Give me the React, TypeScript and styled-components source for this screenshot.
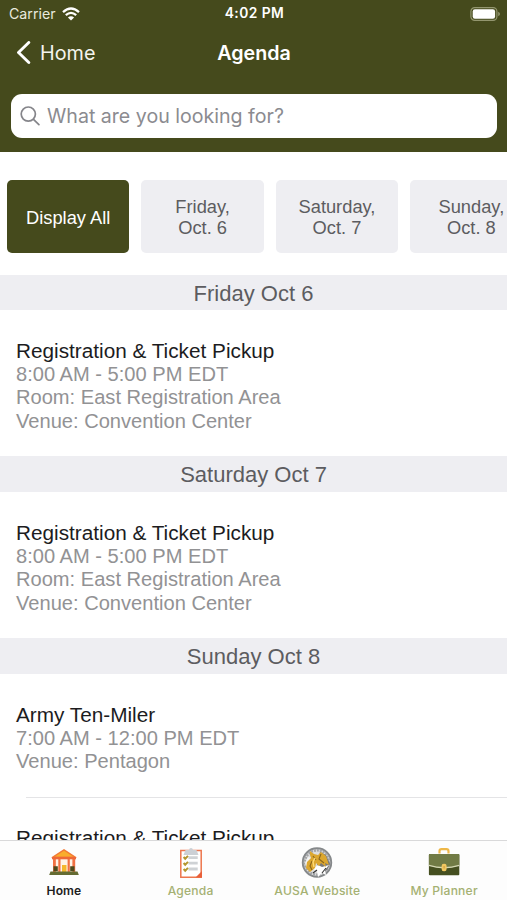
import React from "react";
import styled, { createGlobalStyle } from "styled-components";

const OLIVE = "#454a1c";

const GlobalStyle = createGlobalStyle`
  * { box-sizing: border-box; }
  body { margin: 0; background: #fff; }
  h1, h2, h3, p { margin: 0; font-weight: 400; }
  button { border: 0; padding: 0; background: none; font: inherit; color: inherit; }
`;

const Screen = styled.div`
  width: 507px;
  height: 900px;
  overflow: hidden;
  display: flex;
  flex-direction: column;
  background: #fff;
  font-family: "Liberation Sans", Arial, sans-serif;
`;

const Header = styled.header`
  flex: none;
  height: 152px;
  background: ${OLIVE};
  color: #fff;
  font-family: Inter, sans-serif;
`;

const StatusBar = styled.div`
  height: 27px;
  padding: 0 7px 0 9px;
  display: grid;
  grid-template-columns: 1fr auto 1fr;
  align-items: center;
  line-height: 27px;
`;

const Carrier = styled.div`
  display: flex;
  align-items: center;
  gap: 6px;
  font-size: 14.2px;
  color: #e9eadf;
`;

const Clock = styled.div`
  font-weight: 600;
  font-size: 13.8px;
  letter-spacing: 0.45px;
`;

const Battery = styled.svg`
  justify-self: end;
`;

const NavBar = styled.nav`
  height: 51px;
  padding: 0 16px;
  display: grid;
  grid-template-columns: 1fr auto 1fr;
  align-items: center;
`;

const BackButton = styled.button`
  display: flex;
  align-items: center;
  gap: 9px;
  font-size: 19.8px;
  color: #f4f4ee;
`;

const Title = styled.h1`
  font-size: 19.7px;
  font-weight: 600;
  padding-left: 1px;
`;

const SearchField = styled.label`
  margin: 16px 10px 0 11px;
  height: 43.5px;
  padding-left: 9px;
  display: flex;
  align-items: center;
  gap: 7px;
  border-radius: 11px;
  background: #fff;
  color: #8b8b90;
`;

const SearchInput = styled.input`
  flex: 1;
  border: 0;
  outline: 0;
  padding: 0;
  background: none;
  font: 19.6px Inter, sans-serif;
  &::placeholder { color: #8b8b90; opacity: 1; }
`;

const DayFilter = styled.div`
  flex: none;
  display: flex;
  gap: 12px;
  padding: 28px 0 0 7px;
  height: 122.5px;
  overflow: hidden;
`;

const DayButton = styled.button<{ $active?: boolean }>`
  flex: none;
  width: 122.4px;
  height: 73px;
  padding-top: 1px;
  border-radius: 5px;
  background: ${(p) => (p.$active ? OLIVE : "#eeeef2")};
  color: ${(p) => (p.$active ? "#fff" : "#5c5c60")};
  font-size: 18.3px;
  line-height: 21px;
  white-space: pre-line;
`;

const AgendaList = styled.main`
  flex: 1;
  min-height: 0;
  overflow: hidden;
`;

const DayHeading = styled.h2`
  height: 35.5px;
  background: #eeeef2;
  color: #5c5c60;
  font-size: 22px;
  line-height: 38.5px;
  text-align: center;
`;

const Session = styled.article`
  height: 146.4px;
  padding: 28.8px 16px 0;
`;

const ShortSession = styled(Session)`
  height: 123px;
`;

const PartialSession = styled(Session)`
  height: 60px;
  padding-top: 28px;
`;

const SessionTitle = styled.h3`
  color: #1c1c1e;
  font-size: 20.75px;
  line-height: 24.4px;
`;

const SessionDetail = styled.p`
  color: #929294;
  font-size: 20.1px;
  line-height: 23.2px;
`;

const Divider = styled.hr`
  margin: 0 0 0 26px;
  border: 0;
  height: 1px;
  background: #e4e4e6;
`;

const TabBar = styled.nav`
  flex: none;
  height: 60px;
  border-top: 1px solid #d9d9da;
  background: #fdfdfd;
  display: grid;
  grid-template-columns: repeat(4, 1fr);
`;

const Tab = styled.button<{ $active?: boolean }>`
  display: flex;
  flex-direction: column;
  align-items: center;
  padding: 6px 0 0 1px;
  gap: 4px;
  font-family: Inter, sans-serif;
  font-size: 12.1px;
  line-height: 16px;
  font-weight: ${(p) => (p.$active ? 600 : 500)};
  letter-spacing: ${(p) => (p.$active ? "0.05px" : "0.2px")};
  color: ${(p) => (p.$active ? "#1d1d1d" : "#a5b173")};
`;

const WifiIcon = () => (
  <svg width="18" height="14" viewBox="0 0 18 14" fill="none" stroke="#fff" strokeWidth="2.3">
    <path d="M1 5.1Q9-2 17 5.1" />
    <path d="M3.8 8.2Q9 3.6 14.2 8.2" />
    <path d="M9 13.6 5.9 10.5Q9 8 12.1 10.5Z" fill="#fff" stroke="none" />
  </svg>
);

const BatteryIcon = () => (
  <Battery width="30" height="14" viewBox="0 0 30 14">
    <rect x="0.9" y="0.6" width="26" height="12.8" rx="3.8" fill="none" stroke="#93966f" strokeWidth="1.2" />
    <rect x="2.7" y="2.3" width="22.4" height="9.4" rx="2.2" fill="#fff" />
    <path d="M28.2 4.7Q30 5.4 30 7T28.2 9.3Z" fill="#93966f" />
  </Battery>
);

const BackIcon = () => (
  <svg width="15" height="24" viewBox="0 0 15 24" fill="none" stroke="#fff" strokeWidth="2.9" strokeLinecap="round" strokeLinejoin="round">
    <path d="M12.8 1.5 2.5 11.5l10.3 10" />
  </svg>
);

const SearchIcon = () => (
  <svg width="20" height="20" viewBox="0 0 20 20" fill="none" stroke="#85858a" strokeWidth="1.7" strokeLinecap="round">
    <circle cx="8.3" cy="8.1" r="7.1" />
    <path d="m13.5 13.4 5.4 5.3" />
  </svg>
);

const HomeIcon = () => (
  <svg width="32" height="32" viewBox="0 0 32 32">
    <path d="M5 10h22v16H5z" fill="#fff3e6" />
    <path d="M3 10.5 16 2l13 8.5z" fill="#f27a35" />
    <path d="M7 9.4 16 3.8l9 5.6z" fill="#f9ad2d" />
    <path d="M4 10h24v2.3H4z" fill="#ee6838" />
    <path d="M5 12h2.8v13H5zM10.3 12h2.2v13h-2.2zM19.6 12h2.2v13h-2.2zM24.4 12h2.8v13h-2.8z" fill="#f17042" />
    <path d="M14 18h4.5v7.3H14z" fill="#f4b72d" />
    <path d="M5.5 19.3h4.3v5H5.5zM22.2 19.3h4.3v5h-4.3z" fill="#4c4a1c" />
    <path d="M2.5 24.5h27l1.3 3.5H1.2z" fill="#646b32" />
  </svg>
);

const AgendaIcon = () => (
  <svg width="32" height="32" viewBox="0 0 32 32">
    <path d="M5.8 3.6h20.4v26.6H5.8z" fill="#fff" stroke="#ed764d" strokeWidth="1.5" />
    <path d="M20.5 30.6 27 24V30.6z" fill="#e9603a" />
    <path d="M10.5 3H14q.3-2 2-2t2 2h3.5l2 5h-15z" fill="#ccd0d5" />
    <path d="M13.5 10.6h9.2M13.5 16.2h9.2M13.5 22h9.2" stroke="#cfd2d5" strokeWidth="2.8" />
    <path d="m8.6 10 1.6 1.7 2.8-2.8M8.6 16l1.6 1.7 2.8-2.8M8.6 22l1.6 1.7 2.8-2.8" fill="none" stroke="#b4962f" strokeWidth="2" />
  </svg>
);

const SealIcon = () => (
  <svg width="32" height="32" viewBox="0 0 32 32">
    <circle cx="16" cy="15.5" r="14.2" fill="#dedede" stroke="#85888a" strokeWidth="2" />
    <circle cx="16" cy="15.5" r="12.2" fill="none" stroke="#a2a4a6" strokeWidth="2.6" strokeDasharray="2 1" />
    <path d="m19 5 6 3 4 9-3 6-4 3-6-8z" fill="#77777a" />
    <path d="m17 18 4 2 7-2-4 5 1 5-4-2-4 4-1-6-4-2z" fill="#fff" />
    <path d="m7 10 5 1-1 5-2 7-3-2-2-5z" fill="#f3f3f3" />
    <path d="m9 4 4 3 4 1 3-3 5 4 3 9-4-2 1 4-5-4-2 3-3-3-1 5-5 4-4-4 1-6 4-4-1-3z" fill="#dca72f" />
    <path d="m20 7-2 5 5 4M11 14l-2 5 2 4M12 9l3 4" fill="none" stroke="#8a661d" strokeWidth="1.1" />
    <path d="m14 11-2 4 1 5" fill="none" stroke="#ffdb78" strokeWidth="1.4" />
    <path d="m21 26 4-5M12 26l4-3" fill="none" stroke="#333" strokeWidth="1.1" />
  </svg>
);

const PlannerIcon = () => (
  <svg width="32" height="32" viewBox="0 0 32 32">
    <path d="M11.5 6.6V4.2q0-2 2-2h5q2 0 2 2v2.4" fill="none" stroke="#eeb747" strokeWidth="2.2" />
    <rect x="0.9" y="7" width="30.4" height="21.2" rx="1" fill="#454f20" />
    <path d="M0.9 8q0-1 1-1h28.4q1 0 1 1v10.5Q16 23.5 0.9 18.5z" fill="#717b45" />
    <path d="M0.9 18.3Q16 23.2 31.3 18.3" fill="none" stroke="#d5d8b4" strokeWidth="1.3" />
    <rect x="13.6" y="16.8" width="5" height="7.4" rx="2.2" fill="#f2c75f" />
    <path d="M16.1 19v2.5" stroke="#c99b3e" />
  </svg>
);

const filters = ["Display All", "Friday,\nOct. 6", "Saturday,\nOct. 7", "Sunday,\nOct. 8"];

const registration = [
  "8:00 AM - 5:00 PM EDT",
  "Room: East Registration Area",
  "Venue: Convention Center",
];

const tabs = [
  { label: "Home", Icon: HomeIcon },
  { label: "Agenda", Icon: AgendaIcon },
  { label: "AUSA Website", Icon: SealIcon },
  { label: "My Planner", Icon: PlannerIcon },
];

const SessionBody = ({ title, details = [] }: { title: string; details?: string[] }) => (
  <>
    <SessionTitle>{title}</SessionTitle>
    {details.map((d) => (
      <SessionDetail key={d}>{d}</SessionDetail>
    ))}
  </>
);

export default function App() {
  return (
    <Screen>
      <GlobalStyle />
      <Header>
        <StatusBar>
          <Carrier>
            Carrier
            <WifiIcon />
          </Carrier>
          <Clock>4:02 PM</Clock>
          <BatteryIcon />
        </StatusBar>
        <NavBar>
          <BackButton>
            <BackIcon />
            Home
          </BackButton>
          <Title>Agenda</Title>
        </NavBar>
        <SearchField>
          <SearchIcon />
          <SearchInput placeholder="What are you looking for?" />
        </SearchField>
      </Header>
      <DayFilter>
        {filters.map((label, i) => (
          <DayButton key={label} $active={i === 0}>
            {label}
          </DayButton>
        ))}
      </DayFilter>
      <AgendaList>
        {["Friday Oct 6", "Saturday Oct 7"].map((day) => (
          <section key={day}>
            <DayHeading>{day}</DayHeading>
            <Session>
              <SessionBody title="Registration & Ticket Pickup" details={registration} />
            </Session>
          </section>
        ))}
        <section>
          <DayHeading>Sunday Oct 8</DayHeading>
          <ShortSession>
            <SessionBody title="Army Ten-Miler" details={["7:00 AM - 12:00 PM EDT", "Venue: Pentagon"]} />
          </ShortSession>
          <Divider />
          <PartialSession>
            <SessionBody title="Registration & Ticket Pickup" />
          </PartialSession>
        </section>
      </AgendaList>
      <TabBar>
        {tabs.map(({ label, Icon }, i) => (
          <Tab key={label} $active={i === 0}>
            <Icon />
            {label}
          </Tab>
        ))}
      </TabBar>
    </Screen>
  );
}
